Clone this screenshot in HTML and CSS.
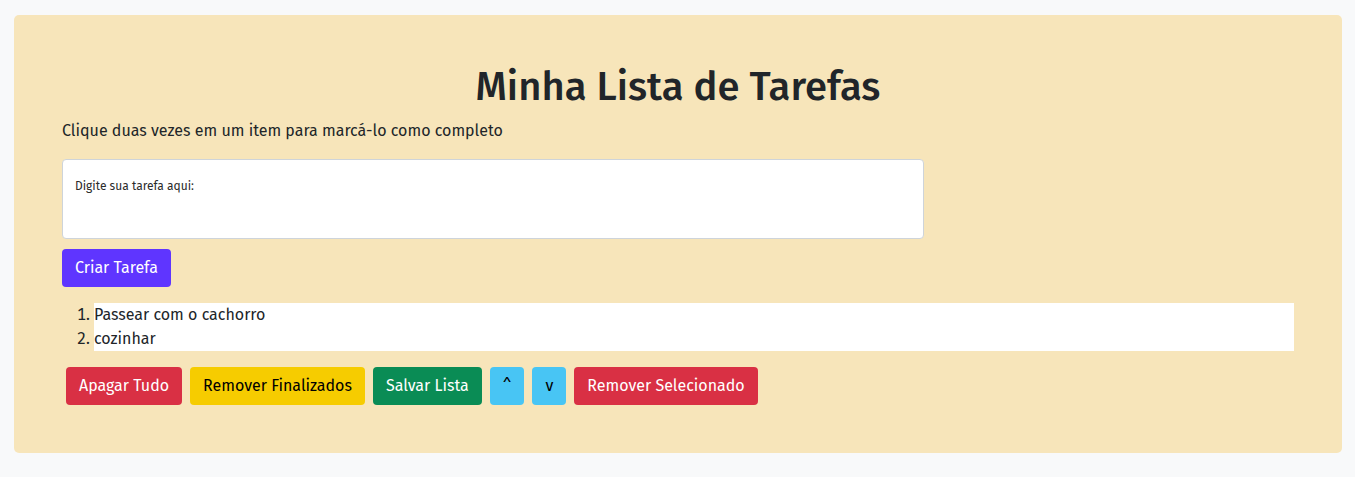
FILE: index.html
```html
<!DOCTYPE html>
<html lang="pt-BR">
<head>
<meta charset="utf-8">
<title>Minha Lista de Tarefas</title>
<link rel="stylesheet" href="styles.css">
</head>
<body>
<main class="card">
  <h1 class="title">Minha Lista de Tarefas</h1>
  <p class="hint">Clique duas vezes em um item para marcá-lo como completo</p>
  <textarea class="task-input" placeholder="Digite sua tarefa aqui:"></textarea>
  <button class="btn btn-purple">Criar Tarefa</button>
  <ol class="task-list">
    <li>Passear com o cachorro</li>
    <li>cozinhar</li>
  </ol>
  <div class="actions">
    <button class="btn btn-red">Apagar Tudo</button>
    <button class="btn btn-yellow">Remover Finalizados</button>
    <button class="btn btn-green">Salvar Lista</button>
    <button class="btn btn-cyan">^</button>
    <button class="btn btn-cyan">v</button>
    <button class="btn btn-red">Remover Selecionado</button>
  </div>
</main>
</body>
</html>
```

FILE: styles.css
```css
* { box-sizing: border-box; }
html, body { margin: 0; }
body {
  background: #f8f9fa;
  font-family: "Fira Sans", Lato, "Liberation Sans", sans-serif;
  color: #212529;
  padding: 15px 13px 24px 14px;
}
.card {
  display: flex;
  flex-direction: column;
  align-items: flex-start;
  background: #f7e5ba;
  border-radius: 5px;
  padding: 48px;
}
.title {
  align-self: stretch;
  text-align: center;
  margin: 0 0 8px;
  font-size: 40px;
  font-weight: 500;
  line-height: 48px;
  color: #212529;
}
.hint {
  margin: 0 0 16px;
  font-size: 16px;
  line-height: 24px;
}
.task-input {
  display: block;
  width: 862px;
  height: 80px;
  margin: 0 0 10px;
  padding: 17px 12px;
  border: 1px solid #ced4da;
  border-radius: 4px;
  background: #fff;
  font-family: inherit;
  font-size: 12px;
  line-height: 18px;
  resize: none;
}
.task-input::placeholder { color: #2b2b2b; opacity: 1; }
.btn {
  font-family: inherit;
  font-size: 16px;
  line-height: 24px;
  padding: 6px 12px;
  border: 1px solid transparent;
  border-radius: 4px;
  color: #fff;
  cursor: pointer;
}
.btn-purple { background: #5f35ff; }
.btn-red { background: #d93044; }
.btn-yellow { background: #f6cc00; color: #000; }
.btn-green { background: #0a8c55; }
.btn-cyan { background: #48c5f4; color: #000; }
.task-list {
  align-self: stretch;
  margin: 16px 0;
  padding-left: 32px;
  font-size: 16px;
  line-height: 24px;
}
.task-list li { background: #fff; }
.actions {
  display: flex;
  gap: 8px;
  padding-left: 4px;
}
```
